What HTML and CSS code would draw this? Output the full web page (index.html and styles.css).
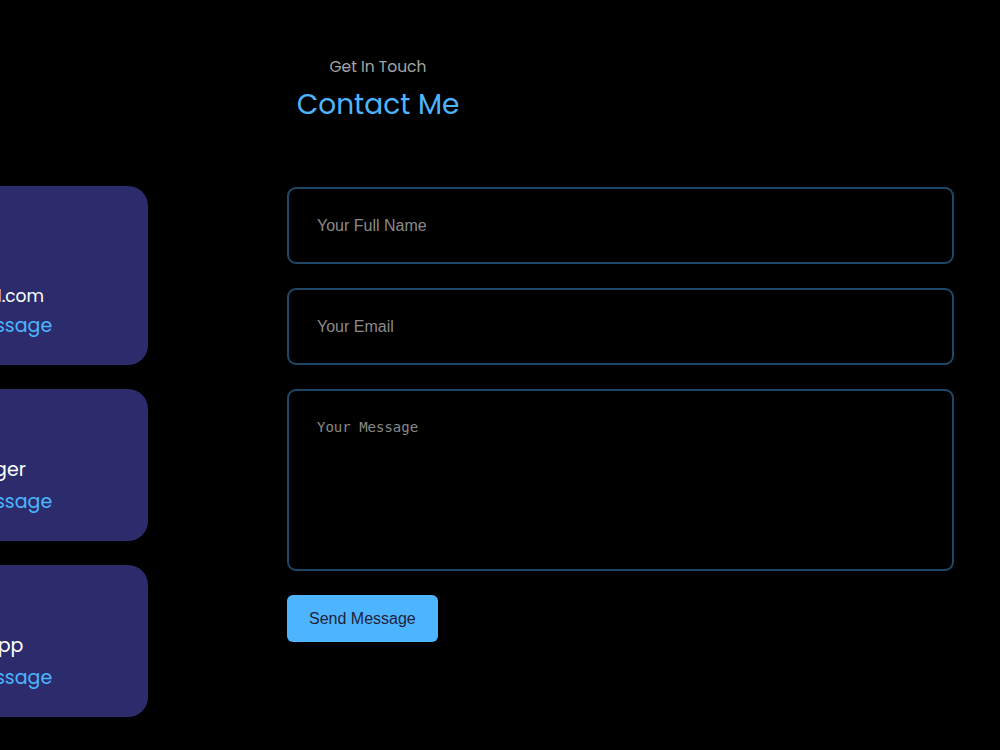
FILE: index.html
```html
<!DOCTYPE html>
<html lang="en">
<head>
  <meta charset="UTF-8" />
  <meta name="viewport" content="width=device-width, initial-scale=1" />
  <title>Contact</title>
  <link rel="stylesheet" href="styles.css">
</head>
<body>
  <section id="contact">
    <div class="contact-head">
      <h5>Get In Touch</h5>
      <h2>Contact Me</h2>
    </div>

    <div class="contact-body">
      <div class="contact-options">
        <article class="option">
          <svg class="option-icon" viewBox="0 0 24 24" width="24" height="24"><path d="M3 5h18v14H3z M3 5l9 8 9-8" fill="none" stroke="#fff" stroke-width="2"/></svg>
          <h4>Email</h4>
          <h5>dev@gmail.com</h5>
          <a href="#">Send a Message</a>
        </article>
        <article class="option">
          <svg class="option-icon" viewBox="0 0 24 24" width="24" height="24"><path d="M12 3C7 3 3 6.6 3 11c0 2.5 1.3 4.7 3.3 6.1V21l3-1.7c.9.2 1.8.3 2.7.3 5 0 9-3.6 9-8S17 3 12 3z" fill="none" stroke="#fff" stroke-width="2"/></svg>
          <h4>Messenger</h4>
          <a href="#">Send a Message</a>
        </article>
        <article class="option">
          <svg class="option-icon" viewBox="0 0 24 24" width="24" height="24"><path d="M12 3a9 9 0 0 0-7.8 13.5L3 21l4.6-1.2A9 9 0 1 0 12 3z" fill="none" stroke="#fff" stroke-width="2"/></svg>
          <h4>WhatsApp</h4>
          <a href="#">Send a Message</a>
        </article>
      </div>

      <form class="contact-form">
        <input type="text" name="name" placeholder="Your Full Name" required>
        <input type="email" name="email" placeholder="Your Email" required>
        <textarea name="message" placeholder="Your Message" required></textarea>
        <button type="submit" class="btn-primary">Send Message</button>
      </form>
    </div>
  </section>
</body>
</html>
```

FILE: styles.css
```css
* {
  margin: 0;
  padding: 0;
  box-sizing: border-box;
}
body {
  background: #000;
  color: #fff;
  font-family: 'Poppins', 'Inter', sans-serif;
  overflow: hidden;
}
.contact-head {
  width: 756px;
  padding-top: 56px;
  text-align: center;
}
.contact-head h5 {
  font-size: 15.5px;
  line-height: 22px;
  font-weight: 400;
  color: #a6a6a6;
}
.contact-head h2 {
  margin-top: 9px;
  font-size: 28px;
  line-height: 36px;
  font-weight: 400;
  color: #4db5ff;
}
.contact-body {
  display: grid;
  grid-template-columns: 348px 667px;
  column-gap: 139px;
  margin-top: 63px;
  margin-left: -200px;
  align-items: start;
}
.contact-options {
  display: flex;
  flex-direction: column;
  gap: 24px;
}
.option {
  background: #2c2c6c;
  border-radius: 20px;
  padding: 22px 20px 25px;
  text-align: center;
}
.option-icon {
  display: block;
  margin: 0 auto 22px;
}
.option h4 {
  font-size: 19px;
  line-height: 26px;
  font-weight: 400;
}
.option h5 {
  margin-top: 3px;
  font-size: 17px;
  line-height: 26px;
  font-weight: 400;
}
.option a {
  display: inline-block;
  margin-top: 5px;
  font-size: 19px;
  line-height: 28px;
  color: #4db5ff;
  text-decoration: none;
}
.option h5 + a {
  margin-top: 3px;
}
.contact-form {
  display: flex;
  flex-direction: column;
  gap: 24px;
  margin-top: 1px;
}
.contact-form input,
.contact-form textarea {
  width: 100%;
  padding: 28px;
  border: 2px solid rgba(77, 181, 255, 0.4);
  border-radius: 9px;
  background: transparent;
  color: #fff;
  resize: none;
  outline: none;
}
.contact-form input {
  height: 77px;
  font-family: 'Liberation Sans', Arial, sans-serif;
  font-size: 16px;
  line-height: 19px;
}
.contact-form textarea {
  height: 182px;
  font-family: 'DejaVu Sans Mono', monospace;
  font-size: 14px;
  line-height: 16px;
}
.contact-form ::placeholder {
  color: #8a8a8a;
}
.btn-primary {
  align-self: flex-start;
  height: 47px;
  padding: 0 22px;
  border: none;
  border-radius: 6px;
  background: #4db5ff;
  color: #1f1f38;
  font-family: 'Liberation Sans', Arial, sans-serif;
  font-size: 16px;
  line-height: 19px;
  cursor: pointer;
}
```
